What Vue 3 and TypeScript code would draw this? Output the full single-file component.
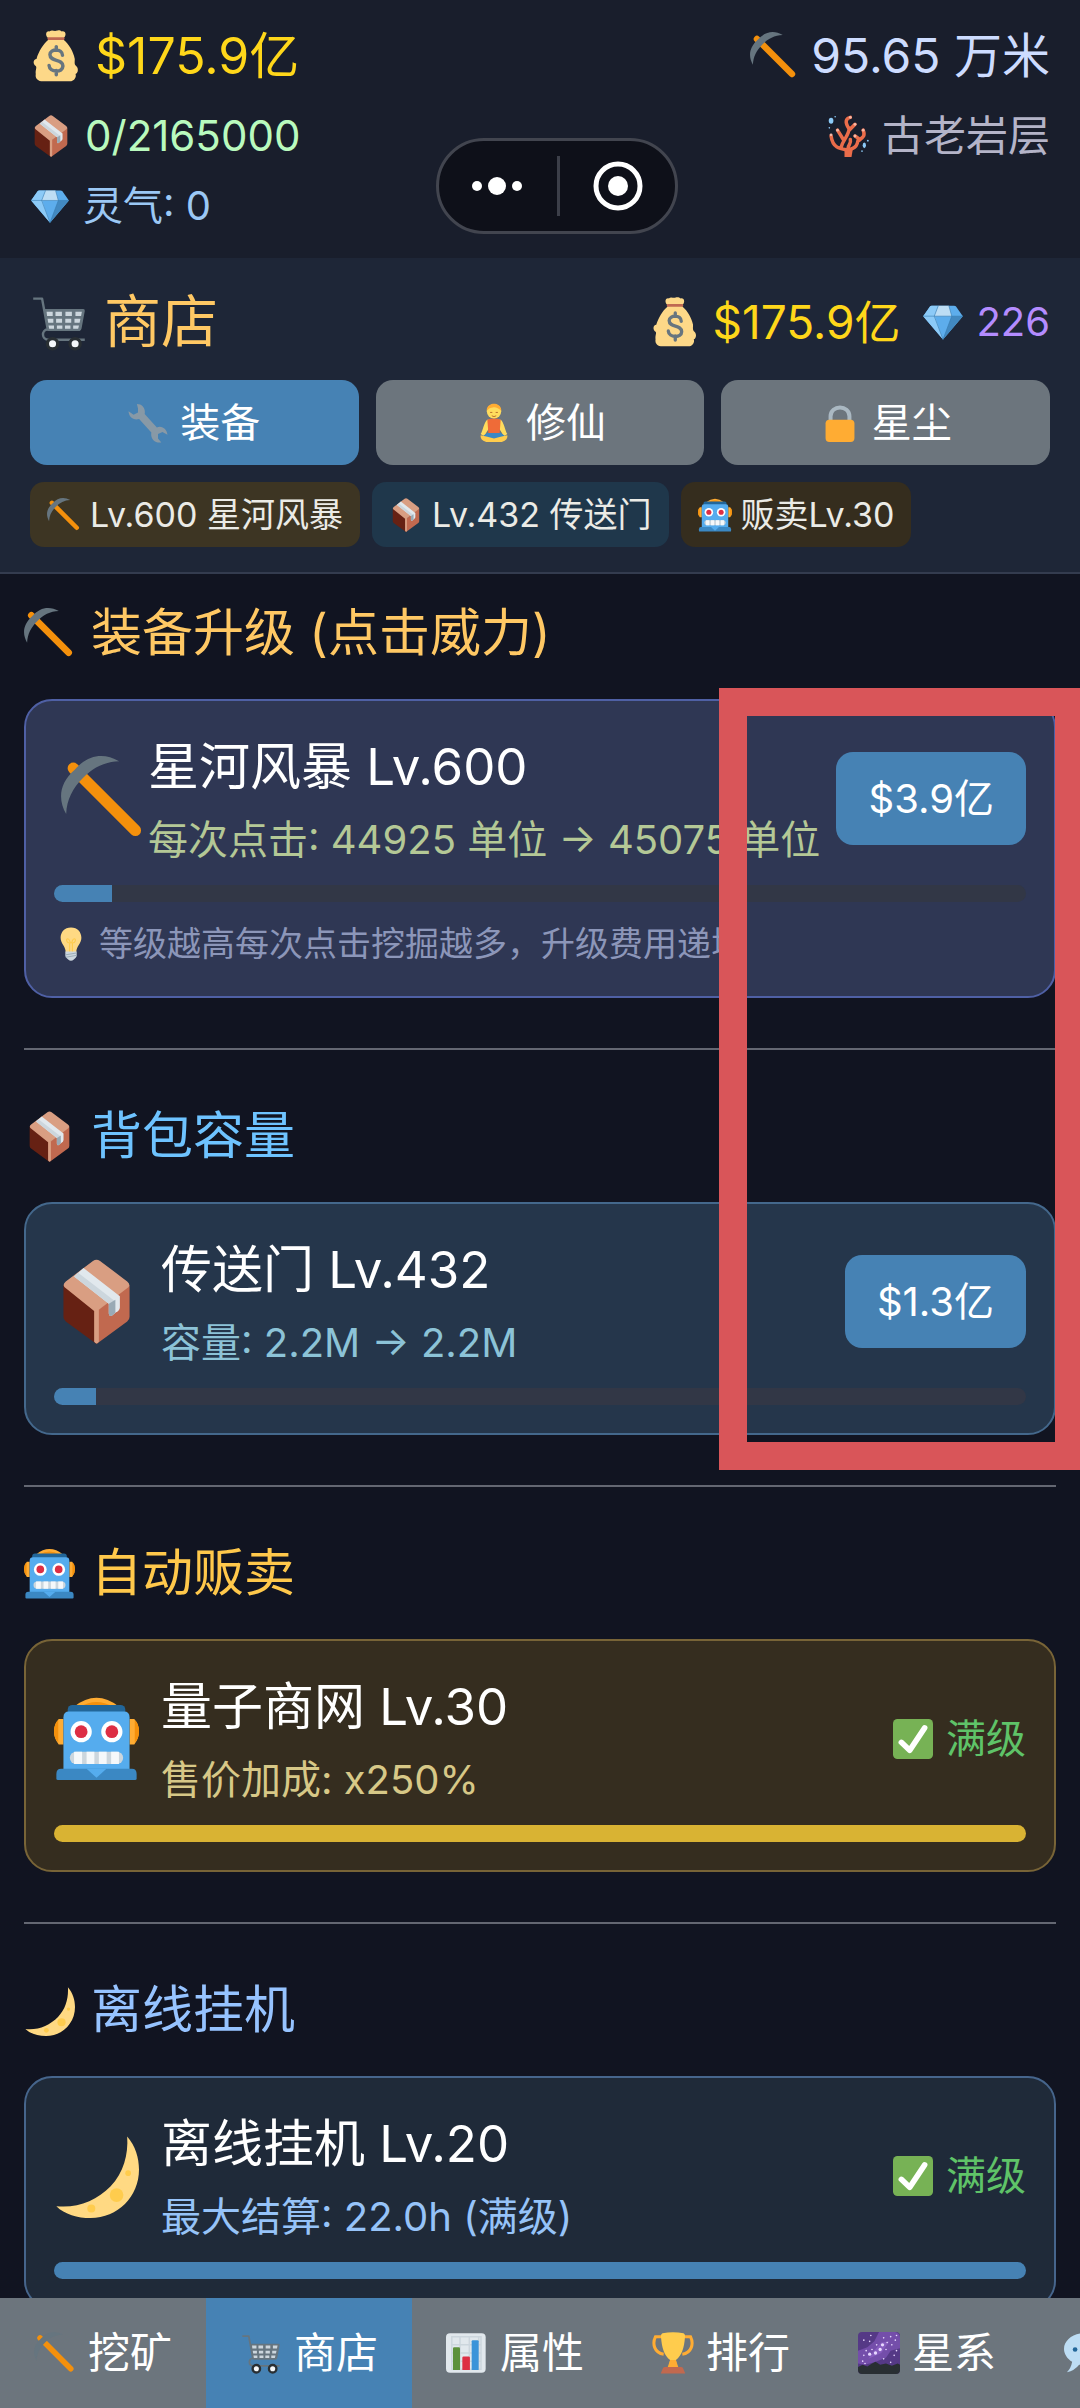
<script setup lang="ts">
import { ref } from 'vue'

interface Tab { icon: string; label: string }
interface Chip { icon: string; label: string; tone: string }
interface Upgrade {
  tone: string
  icon: string
  heading: string
  name: string
  effect: string
  progress: number
  price?: string
  hint?: string
}

const tabs: Tab[] = [
  { icon: 'wrench', label: '装备' },
  { icon: 'lotus', label: '修仙' },
  { icon: 'lock', label: '星尘' },
]
const activeTab = ref(0)

const chips: Chip[] = [
  { icon: 'pick', label: 'Lv.600 星河风暴', tone: 'amber' },
  { icon: 'box', label: 'Lv.432 传送门', tone: 'teal' },
  { icon: 'robot', label: '贩卖Lv.30', tone: 'brown' },
]

const upgrades: Upgrade[] = [
  {
    tone: 'indigo', icon: 'pick', heading: '装备升级 (点击威力)', name: '星河风暴 Lv.600',
    effect: '每次点击: 44925 单位 → 45075 单位', progress: 6, price: '$3.9亿',
    hint: '等级越高每次点击挖掘越多，升级费用递增',
  },
  {
    tone: 'blue', icon: 'box', heading: '背包容量', name: '传送门 Lv.432',
    effect: '容量: 2.2M → 2.2M', progress: 4.32, price: '$1.3亿',
  },
  {
    tone: 'gold', icon: 'robot', heading: '自动贩卖', name: '量子商网 Lv.30',
    effect: '售价加成: x250%', progress: 100,
  },
  {
    tone: 'night', icon: 'moon', heading: '离线挂机', name: '离线挂机 Lv.20',
    effect: '最大结算: 22.0h (满级)', progress: 100,
  },
]

const nav: Tab[] = [
  { icon: 'pick', label: '挖矿' },
  { icon: 'cart', label: '商店' },
  { icon: 'chart', label: '属性' },
  { icon: 'trophy', label: '排行' },
  { icon: 'galaxy', label: '星系' },
  { icon: 'speech', label: '' },
]
const activeNav = ref(1)

const stars: number[][] = [
  [4, 25, 1], [5, 7, 1], [11, 3, 1], [10, 8, 1], [7, 16, 1], [12, 15, 1], [10, 19, 2], [15, 18, 2],
  [19, 15, 2], [16, 11, 1], [21, 11, 2], [25, 9, 1], [22, 5, 1], [28, 4, 1], [33, 3, 1], [32, 7, 1],
  [24, 15, 1], [29, 11, 1], [33, 16, 1], [31, 20, 1], [22, 23, 1], [28, 26, 1], [5, 20, 1], [6, 27, 1],
]
</script>

<template>
  <div class="app">
    <svg class="sprite" aria-hidden="true">
      <symbol id="pick" viewBox="0 0 36 36">
        <path d="M5.200 5.200L31.500 31.500" stroke="#f4900c" stroke-width="4.800" stroke-linecap="round" />
        <path fill="#66757f" d="M2.200 24.600C-1.500 18-.6 11.500 5.800 5.800C11.500 -.6 18-1.500 24.600 2.200C18.500 2.400 13.500 5 9.300 9.300C5 13.500 2.400 18.500 2.200 24.600Z" />
      </symbol>
      <symbol id="money" viewBox="0 0 36 36">
        <path fill="#fdd888" d="M13 6C10 4 11 .5 13.500 1C15-.2 16.500.8 18 .6C20-.2 21 .4 22 1C25 .5 25.500 4 23 6L23.500 7C27 10 30 15 31 20C31 22 30.500 24 32 25C34 27 33 30 31.500 30.500C32.500 33 30 35.500 28 35.500H9C5 35.500 3.500 33 4 30.500C3.500 28 5 26 4 25C1.500 23 2.500 20 4.500 20C6 15 9 10 12.500 7Z" />
        <path fill="#bf6952" d="M12.500 5H23.500Q24.500 6 23.500 7H12.500Q11.500 6 12.500 5Z" />
        <path d="M22.500 17.500C22.500 12.500 13.800 12.800 13.800 17C13.800 22.500 22.800 19.500 22.800 25C22.800 29.800 13.500 29.500 13.200 24.500M18.200 11.500V14M18.200 28V31" fill="none" stroke="#67757f" stroke-width="2.400" stroke-linecap="round" />
      </symbol>
      <symbol id="box" viewBox="0 0 36 36">
        <path fill="#662113" d="M4 11L18 22V36L5 26.500Q4 25.800 4 24.500Z" />
        <path fill="#c1694f" d="M32 11L18 22V36L31 26.500Q32 25.800 32 24.500Z" />
        <path fill="#d99e82" d="M16.500 .8Q18-.2 19.500 .8L31 9.500Q32.500 10.800 31.500 12L19 21.500V35Q18 36.500 17 35V22L4.500 12Q3.500 10.800 5 9.500Z" />
        <path fill="#e1e8ed" d="M12.500 3.800L27.900 15.800V20.500Q27.800 21.800 26.300 22.600L24.500 24Q23.200 24.500 23.200 23V19L8.500 7.400Z" />
        <path fill="#ccd6dd" d="M10.200 5.800L26 18L23.200 19L8.500 7.400Z" />
        <path fill="#99aab5" d="M23.200 19L26 17.300V22.800L24.500 24Q23.200 24.500 23.200 23Z" />
      </symbol>
      <symbol id="gem" viewBox="0 0 36 36">
        <path fill="#5dadec" d="M1 13L7 4.500Q7.500 4 8.500 4H27.500Q28.500 4 29 4.500L35 13L18 33Z" />
        <path fill="#8ccaf7" d="M1 13L7 4.500L8 4H14L11 13L18 33Z" />
        <path fill="#bdddf4" d="M14 4H23L25.500 13H10.500Z" />
        <path fill="#4289c1" d="M25.500 13H35L18 33Z" />
        <path d="M1 13H35M14 4L10.500 13L18 33L25.500 13L23 4" fill="none" stroke="#3679ad" stroke-width=".5" />
      </symbol>
      <symbol id="coral" viewBox="0 0 36 36">
        <g fill="none" stroke="#ea6c4a" stroke-width="3" stroke-linecap="round" stroke-linejoin="round">
          <path d="M18 34V30C12 29 5 29 3.500 18M12 28C14 20 19 18 19 11M14 21L9 13M19 12C15 6 16 3 20 2M19 13L24 8M18 30C26 28 26 25 27 20L24 18M27 22C31 19 33 18 31 13M18 29C18 25 21 25 20 21" />
        </g>
        <path fill="#ea6c4a" d="M15 30H22L21 36H15Z" />
        <g fill="#f7b8a5"><circle cx="3.500" cy="17" r="1.200" /><circle cx="9" cy="13" r="1.200" /><circle cx="20" cy="2" r="1.200" /><circle cx="24" cy="8" r="1.200" /><circle cx="31" cy="13" r="1.200" /><circle cx="24" cy="18" r="1.200" /></g>
        <g fill="#8ccaf7"><ellipse cx="3.500" cy="5" rx="2" ry="2.600" /><circle cx="7" cy="1.500" r=".7" /><circle cx="2" cy="11" r=".7" /><ellipse cx="32" cy="26" rx="1.400" ry="2.500" /><circle cx="35" cy="22" r=".8" /><circle cx="30" cy="31" r=".7" /></g>
      </symbol>
      <symbol id="cart" viewBox="0 0 36 36">
        <path d="M2 3.500H7.500L11 22.500M11 22.500C7 23 7 29 11.500 29H34M11 22.800H31" fill="none" stroke="#66757f" stroke-width="1.500" stroke-linejoin="round" />
        <path fill="#66757f" d="M8.500 10H33Q34.200 10 34 11.200L32 22Q31.800 23.500 30.500 23.500H11Z" />
        <g fill="#ccd6dd">
          <path d="M10.300 11.600h3.800v2.600h-3.500zM15.800 11.600h4v2.600h-4zM22 11.600h4v2.600h-4zM28.200 11.600h4l-.5 2.600h-3.500zM10.900 16h3.600v2.400h-3.200zM16.200 16h3.700v2.400h-3.700zM21.900 16h3.700v2.400h-3.700zM27.600 16h3.700l-.5 2.400h-3.200zM11.500 20.200h3.400v2h-3zM16.700 20.200h3.400v2h-3.400zM21.700 20.200h3.400v2h-3.400zM26.800 20.200h3.600l-.5 2h-3.100z" />
        </g>
        <g fill="#f5f8fa" stroke="#292f33" stroke-width="2"><circle cx="14" cy="31.500" r="3.200" /><circle cx="28" cy="31.500" r="3.200" /></g>
      </symbol>
      <symbol id="wrench" viewBox="0 0 36 36">
        <path fill="#8899a6" d="M8 1C13 1 16 5 15 10L26 22C31 20 35 24 35.500 28.500L31 26L27 28V32L30 35.500C24 36.500 20 32 21 26.500L10 14.500C4.500 16 .5 12 .5 7.500L5 10.500L9 8.500V5Z" />
      </symbol>
      <symbol id="lotus" viewBox="0 0 36 36">
        <path fill="#ffdc5d" d="M12 15C9 17 8 25 6 28L9 30L14 22H22L27 30L30 28C28 25 27 17 24 15Z" />
        <path fill="#ef6b38" d="M12 15Q18 13 24 15L23 28H13Z" />
        <path fill="#3b88c3" d="M12 27H24L30 31L18 33L6 31Z" />
        <path fill="#ffcc4d" d="M6 29Q12 30 18 32Q24 30 30 29Q31 33 25 35H11Q5 33 6 29Z" />
        <circle cx="18" cy="7.500" r="6.500" fill="#ffdc5d" />
        <path fill="#ffac33" d="M11.500 7C11-1.500 25-1.500 24.500 7C22 5 20 3.500 17 4C15 4 13 5 11.500 7Z" />
        <path d="M14.500 8.500H16.500M19.500 8.500H21.500M16 11.500Q18 13 20 11.500" fill="none" stroke="#b5672a" stroke-width=".8" />
      </symbol>
      <symbol id="lock" viewBox="0 0 36 36">
        <path d="M9.500 18V12C9.500 1.500 26.500 1.500 26.500 12V18" fill="none" stroke="#aab8c2" stroke-width="3.600" />
        <rect x="5" y="15" width="26" height="20" rx="3.500" fill="#ffac33" />
      </symbol>
      <symbol id="robot" viewBox="0 0 36 36">
        <path fill="#ffac33" d="M8.500 4.500Q18-3 27.500 4.500Z" />
        <path fill="#f4900c" d="M11 4.500Q18 .5 25 4.500Z" />
        <rect x="5.800" y="3.800" width="24.400" height="6" rx="2" fill="#269" />
        <path fill="#ffac33" d="M4 9.700V20.500H2Q0 18 0 15T2 9.700ZM32 9.700V20.500H34Q36 18 36 15T34 9.700Z" />
        <path fill="#f4900c" d="M0 15Q0 11.500 1.800 10.300V19.700Q0 18 0 15ZM36 15Q36 11.500 34.200 10.300V19.700Q36 18 36 15Z" />
        <path fill="#55acee" d="M4 9Q4 6.600 6.400 6.600H29.600Q32 6.600 32 9V32H4Z" />
        <path fill="#3b88c3" d="M1 33Q1 30.800 3 30.800H33Q35 30.800 35 33V35Q35 35.600 34.300 35.600H1.700Q1 35.600 1 35Z" />
        <path fill="#55acee" d="M13.800 30.800H22.200L18 34.600Z" />
        <g fill="#fff"><circle cx="11.500" cy="15.100" r="4.500" /><circle cx="24.500" cy="15.100" r="4.500" /></g>
        <g fill="#dd2e44"><circle cx="11.500" cy="15.100" r="2.700" /><circle cx="24.500" cy="15.100" r="2.700" /></g>
        <rect x="6.700" y="23.600" width="22.600" height="5.200" rx="2.600" fill="#ccd6dd" />
        <path fill="#f5f8fa" d="M8.500 23.600h3.400v5.200h-3.400zM13.800 23.600h3.300v5.200h-3.300zM19 23.600h3.300v5.200h-3.300zM24.200 23.600h3.300v5.200h-3.300z" />
      </symbol>
      <symbol id="bulb" viewBox="0 0 36 36">
        <path fill="#ffd983" d="M18 .5C11 .5 7 5.500 7 11.500C7 17.500 12 20 12.500 27H23.500C24 20 29 17.500 29 11.500C29 5.500 25 .5 18 .5Z" />
        <path d="M16.500 27V17C13 17 12.500 12.500 14.500 12.500C17 12.500 16.500 17 18 17S19 12.500 21.500 12.500C23.500 12.500 23 17 19.500 17V27" fill="none" stroke="#ffcc4d" stroke-width="1.200" />
        <path fill="#ccd6dd" d="M12 26H24V31Q23 33 21 34.500Q18 37 15 34.500Q13 33 12 31Z" />
        <path d="M12 29.500L24 27.500M12.500 32L24 30" stroke="#99aab5" stroke-width="1" />
      </symbol>
      <symbol id="check" viewBox="0 0 36 36">
        <rect width="36" height="36" rx="4" fill="#77b255" />
        <path d="M7.500 21L15 28.200L28.500 8" fill="none" stroke="#fff" stroke-width="5" stroke-linecap="round" stroke-linejoin="round" />
      </symbol>
      <symbol id="moon" viewBox="0 0 36 36">
        <path fill="#ffd983" d="M31 1.500C34.500 5.500 36 10.500 36 15.500C36 27 27 36 15.500 36C10 36 4.500 34.500 1 31C10 32 18 28.500 24 22.500C29.500 17 31.500 9 31 1.500Z" />
        <g fill="#ffcc4d"><circle cx="26.500" cy="26.300" r="2.900" /><circle cx="15.800" cy="32" r="1.700" /><circle cx="31.400" cy="17" r="1.200" /></g>
      </symbol>
      <symbol id="chart" viewBox="0 0 36 36">
        <rect x="0" y="1" width="34" height="34" rx="3.500" fill="#e1e8ed" />
        <path d="M5 4H30V32H5ZM5 11H30M5 18H30M5 25H30M12 4V32M20 4V32M28 4V32" fill="none" stroke="#ccd6dd" stroke-width="1.300" />
        <path fill="#5c913b" d="M6 14q0-1 1-1h4q1 0 1 1v18.500h-6z" />
        <path fill="#dd2e44" d="M14 22q0-1 1-1h4.500q1 0 1 1v10.500h-6.500z" />
        <path fill="#3b94d9" d="M22 8q0-1 1-1h4q1 0 1 1v24.500h-6z" />
      </symbol>
      <symbol id="trophy" viewBox="0 0 36 36">
        <path d="M9 4H3C0 10 2 18 10 19M27 4H33C36 10 34 18 26 19" fill="none" stroke="#ffac33" stroke-width="2.600" />
        <path fill="#ffcc4d" d="M9 1Q18-.5 27 1Q28.500 1.500 28.300 4C27.500 14 25.500 20 20.500 24L21.500 30H14.500L15.500 24C10.500 20 8.500 14 7.700 4Q7.500 1.500 9 1Z" />
        <path fill="#ffac33" d="M15.500 24H20.500L22.500 30H13.500Z" />
        <path fill="#c1694f" d="M11 30H25Q26.500 30 27 32L28.500 35.500H7.500L9 32Q9.500 30 11 30Z" />
      </symbol>
      <symbol id="galaxy" viewBox="0 0 36 36">
        <rect width="36" height="36" rx="3.500" fill="#553986" />
        <path fill="#744eaa" d="M18 0H32Q36 1 36 5V14L28 16L24 22L14 26L6 28L0 27V16L8 13L14 8Z" />
        <path fill="#9266cc" opacity=".6" d="M27 8L20 18L9 23L13 17L20 9Z" />
        <path fill="#292f33" d="M0 30L4 28L8 29.500L12 27L15 25.500L19 28L24 27L29 29L34 27L36 28V32.500Q36 36 32.500 36H3.500Q0 36 0 32.500Z" />
        <g fill="#e8d8ff"><circle v-for="(s, i) in stars" :key="i" :cx="s[0]" :cy="s[1]" :r="s[2] * 0.7" /></g>
      </symbol>
      <symbol id="speech" viewBox="0 0 36 36">
        <path fill="#bdddf4" d="M18 1C8 1 0 7 0 14.500C0 19 3 23 7 25.500Q6 31 2.500 34.500Q9 33 13 28C29 30 36 22 36 14.500C36 7 28 1 18 1Z" />
        <g fill="#269"><circle cx="9.500" cy="15" r="2" /><circle cx="18" cy="15" r="2" /><circle cx="26.500" cy="15" r="2" /></g>
      </symbol>
    </svg>

    <header class="status">
      <div class="status-col">
        <div class="line cash"><svg class="icon i52"><use href="#money" /></svg>$175.9亿</div>
        <div class="line bag"><svg class="icon i42"><use href="#box" /></svg>0/2165000</div>
        <div class="line spirit"><svg class="icon i40"><use href="#gem" /></svg>灵气: 0</div>
      </div>
      <div class="status-col right">
        <div class="line depth"><svg class="icon i48"><use href="#pick" /></svg>95.65 万米</div>
        <div class="line layer"><svg class="icon i42"><use href="#coral" /></svg>古老岩层</div>
      </div>
      <div class="capsule">
        <button type="button" aria-label="更多">
          <svg width="52" height="20" viewBox="0 0 52 20" fill="#fff"><circle cx="6" cy="10" r="5" /><circle cx="26" cy="10" r="9" /><circle cx="46" cy="10" r="5" /></svg>
        </button>
        <i class="capsule-rule"></i>
        <button type="button" aria-label="关闭">
          <svg width="50" height="50" viewBox="0 0 50 50"><circle cx="25" cy="25" r="22" fill="none" stroke="#fff" stroke-width="5" /><circle cx="25" cy="25" r="10" fill="#fff" /></svg>
        </button>
      </div>
    </header>

    <section class="shop">
      <div class="shop-top">
        <h1><svg class="icon i58"><use href="#cart" /></svg>商店</h1>
        <div class="wallet">
          <span class="coins"><svg class="icon i50"><use href="#money" /></svg>$175.9亿</span>
          <span class="gems"><svg class="icon i42"><use href="#gem" /></svg>226</span>
        </div>
      </div>
      <div class="tabs">
        <button v-for="(t, i) in tabs" :key="t.icon" type="button" :class="{ active: i === activeTab }" @click="activeTab = i">
          <svg class="icon i40"><use :href="'#' + t.icon" /></svg>{{ t.label }}
        </button>
      </div>
      <div class="chips">
        <span v-for="c in chips" :key="c.icon" class="chip" :class="c.tone">
          <svg class="icon i34"><use :href="'#' + c.icon" /></svg>{{ c.label }}
        </span>
      </div>
    </section>

    <main class="list">
      <div class="list-inner">
        <section v-for="u in upgrades" :key="u.icon" class="group" :class="u.tone">
          <h2><svg class="icon i51"><use :href="'#' + u.icon" /></svg>{{ u.heading }}</h2>
          <article class="card">
            <div class="row">
              <svg class="icon i85"><use :href="'#' + u.icon" /></svg>
              <div class="info">
                <h3>{{ u.name }}</h3>
                <p>{{ u.effect }}</p>
              </div>
              <button v-if="u.price" type="button" class="buy">{{ u.price }}</button>
              <span v-else class="maxed"><svg class="icon i40"><use href="#check" /></svg>满级</span>
            </div>
            <div class="track"><div class="fill" :style="{ width: u.progress + '%' }"></div></div>
            <div v-if="u.hint" class="hint"><svg class="icon i34"><use href="#bulb" /></svg>{{ u.hint }}</div>
          </article>
        </section>
        <div class="marker"></div>
      </div>
    </main>

    <nav class="nav">
      <button v-for="(n, i) in nav" :key="n.icon" type="button" :class="{ active: i === activeNav }" @click="activeNav = i">
        <svg class="icon i42"><use :href="'#' + n.icon" /></svg>{{ n.label }}
      </button>
    </nav>
  </div>
</template>

<style>
body {
  margin: 0;
  background: #111421;
}
</style>

<style scoped>
.app {
  display: flex;
  flex-direction: column;
  height: 100vh;
  overflow: hidden;
  background: #111421;
  color: #fff;
  font-family: Inter, "Noto Sans CJK SC", sans-serif;
  font-size: 40px;
  line-height: 1.4;
  white-space: nowrap;
}
.sprite {
  position: absolute;
  width: 0;
  height: 0;
}
button {
  border: 0;
  padding: 0;
  margin: 0;
  background: none;
  color: inherit;
  font: inherit;
  cursor: pointer;
}
h1, h2, h3, p {
  margin: 0;
  font-weight: 400;
}
.icon { flex: none; display: block; }
.i34 { width: 34px; height: 34px; }
.i40 { width: 40px; height: 40px; }
.i42 { width: 42px; height: 42px; }
.i48 { width: 48px; height: 48px; }
.i50 { width: 50px; height: 50px; }
.i51 { width: 51px; height: 51px; }
.i52 { width: 52px; height: 52px; }
.i58 { width: 58px; height: 58px; }
.i85 { width: 85px; height: 85px; }

.status {
  position: relative;
  flex: none;
  display: flex;
  justify-content: space-between;
  padding: 16px 30px 22px;
  background: #191e2c;
}
.line {
  display: flex;
  align-items: center;
  gap: 13px;
  height: 80px;
}
.right .line { justify-content: flex-end; }
.cash { font-size: 50px; color: #ffd71a; }
.bag { font-size: 42px; color: #b9fabe; }
.spirit { height: 60px; font-size: 40px; color: #9bc8f5; }
.depth { font-size: 48px; color: #cddcff; }
.layer { font-size: 42px; color: #b4b4c8; }
.capsule {
  position: absolute;
  left: 436px;
  top: 138px;
  box-sizing: border-box;
  display: flex;
  align-items: center;
  justify-content: space-between;
  width: 242px;
  height: 96px;
  padding: 0 32px;
  border: 3px solid #42454f;
  border-radius: 48px;
  background: #0e1019;
}
.capsule svg { display: block; }
.capsule-rule {
  width: 3px;
  height: 60px;
  background: #3c3f49;
}

.shop {
  flex: none;
  padding: 22px 30px 25px;
  border-bottom: 2px solid #343c4f;
  background: #1e2637;
}
.shop-top {
  display: flex;
  align-items: center;
  justify-content: space-between;
  height: 84px;
  margin-bottom: 16px;
}
h1 {
  display: flex;
  align-items: center;
  gap: 16px;
  font-size: 57px;
  color: #ffc864;
}
.wallet { display: flex; align-items: center; gap: 22px; }
.wallet span { display: flex; align-items: center; gap: 12px; }
.coins { font-size: 46px; color: #ffd71a; }
.gems { font-size: 40px; color: #b48cff; }
.tabs { display: flex; gap: 17px; }
.tabs button {
  flex: 1;
  display: flex;
  align-items: center;
  justify-content: center;
  gap: 12px;
  height: 85px;
  border-radius: 17px;
  background: #6c757d;
  font-size: 40px;
}
.tabs button.active { background: #4682b4; }
.chips {
  display: flex;
  gap: 12px;
  margin-top: 17px;
}
.chip {
  display: flex;
  align-items: center;
  gap: 9px;
  height: 65px;
  padding: 0 17px;
  border-radius: 14px;
  font-size: 34px;
  color: #ebebe6;
}
.chip.amber { background: #3d3523; }
.chip.teal { background: #1f374b; }
.chip.brown { background: #352d1e; }

.list {
  flex: 1;
  min-height: 0;
  overflow: hidden auto;
  scrollbar-width: none;
}
.list-inner {
  position: relative;
  padding: 22px 24px 50px;
  overflow: hidden;
}
.group + .group {
  margin-top: 50px;
  padding-top: 49px;
  border-top: 2px solid #646772;
}
h2 {
  display: flex;
  align-items: center;
  gap: 16px;
  height: 74px;
  margin-bottom: 29px;
  font-size: 51px;
}
.card {
  padding: 28px;
  border: 2px solid;
  border-radius: 28px;
}
.row {
  display: flex;
  align-items: center;
  gap: 22px;
}
.info { flex: 1; min-width: 0; }
h3 { font-size: 51px; line-height: 76px; }
.info p { margin-top: 6px; font-size: 40px; line-height: 57px; }
.buy {
  height: 93px;
  padding: 0 32px;
  border-radius: 17px;
  background: #4682b4;
  font-size: 40px;
}
.maxed {
  display: flex;
  align-items: center;
  gap: 13px;
  color: #5fc368;
}
.track {
  height: 17px;
  margin-top: 17px;
  border-radius: 9px;
  overflow: hidden;
  background: #323746;
}
.fill { height: 100%; background: #4682b4; }
.hint {
  display: flex;
  align-items: center;
  gap: 11px;
  height: 49px;
  margin-top: 17px;
  font-size: 34px;
  color: #8c96b9;
}

.indigo h2 { color: #ffc864; }
.indigo .card { background: #2f3754; border-color: #4f60a5; }
.indigo .info p { color: #b4c896; }
.indigo .row { gap: 2px; padding-left: 7px; }
.blue h2 { color: #6ec3ff; }
.blue .card { background: #25364b; border-color: #44688c; }
.blue .info p { color: #8cc3d7; }
.gold h2 { color: #ffc84b; }
.gold .card { background: #352d1f; border-color: #786437; }
.gold .info p { color: #d7c887; }
.gold .fill { background: #d9b333; }
.night h2 { color: #96c3ff; }
.night .card { background: #1f2a39; border-color: #46658c; }
.night .info p { color: #96c3f8; }

.marker {
  position: absolute;
  top: 114px;
  right: -3px;
  box-sizing: border-box;
  width: 364px;
  height: 782px;
  border: 28px solid #d95559;
  pointer-events: none;
}

.nav {
  flex: none;
  display: flex;
  height: 110px;
  overflow: hidden;
  background: #6c757d;
}
.nav button {
  flex: none;
  display: flex;
  align-items: center;
  gap: 12px;
  padding: 0 34px;
  font-size: 42px;
}
.nav button.active { background: #4682b4; }
</style>
